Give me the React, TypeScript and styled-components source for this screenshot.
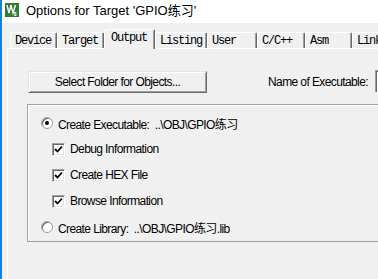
import styled, { createGlobalStyle } from 'styled-components';

const GlobalStyle = createGlobalStyle`
  html, body {
    margin: 0;
    padding: 0;
    background: #f0f0f0;
  }
`;

const Window = styled.div`
  width: 378px;
  height: 279px;
  overflow: hidden;
  display: flex;
  flex-direction: column;
  background: #f0f0f0;
  border-left: 2px solid #1c7fd6;
  box-sizing: border-box;
  font-family: "Liberation Sans", Arial, "Noto Sans CJK SC", sans-serif;
  color: #000;
`;

const TitleBar = styled.div`
  height: 23px;
  flex-shrink: 0;
  background: #ffffff;
  display: flex;
  align-items: flex-start;
  padding: 3px 0 0 3px;
  box-sizing: border-box;
  gap: 7px;
`;

const TitleText = styled.span`
  font-size: 13px;
  line-height: 15px;
  white-space: nowrap;
  color: #000;
`;

const Body = styled.div`
  flex: 1;
  display: flex;
  flex-direction: column;
  padding: 6px 0 0 5px;
`;

const TabStrip = styled.div`
  display: flex;
  align-items: flex-end;
  height: 20px;
  padding-left: 3px;
  margin-bottom: -1px;
  position: relative;
  z-index: 1;
`;

const Tab = styled.div<{ $width: number; $active?: boolean }>`
  width: ${({ $width }) => $width}px;
  flex-shrink: 0;
  height: ${({ $active }) => ($active ? 20 : 16)}px;
  margin-bottom: ${({ $active }) => ($active ? 0 : 1)}px;
  box-sizing: border-box;
  background: #f0f0f0;
  border-top: 1px solid #ffffff;
  border-left: 1px solid #ffffff;
  border-right: 1px solid #696969;
  box-shadow: inset -1px 0 0 #a0a0a0;
  border-radius: 2px 2px 0 0;
  padding: ${({ $active }) => ($active ? '2px 0 0 6px' : '2px 0 0 4px')};
  font-family: "Liberation Mono", "DejaVu Sans Mono", "Noto Sans CJK SC", monospace;
  font-size: 12px;
  letter-spacing: -1.2px;
  line-height: 12px;
  white-space: nowrap;
  overflow: hidden;
`;

const Panel = styled.div`
  flex: 1;
  border-top: 1px solid #ffffff;
  border-left: 1px solid #ffffff;
  padding: 22px 0 0 20px;
  display: flex;
  flex-direction: column;
`;

const TopRow = styled.div`
  display: flex;
  align-items: center;
  height: 22px;
`;

const Button = styled.div`
  width: 179px;
  height: 22px;
  box-sizing: border-box;
  flex-shrink: 0;
  display: flex;
  align-items: center;
  justify-content: center;
  background: #f0f0f0;
  border-top: 1px solid #e3e3e3;
  border-left: 1px solid #e3e3e3;
  border-right: 1px solid #696969;
  border-bottom: 1px solid #696969;
  box-shadow: inset 1px 1px 0 #ffffff, inset -1px -1px 0 #a0a0a0;
  font-size: 12px;
  letter-spacing: -0.6px;
  white-space: nowrap;
`;

const Label = styled.span`
  margin-left: 61px;
  font-size: 12px;
  letter-spacing: -0.6px;
  white-space: nowrap;
`;

const Input = styled.div`
  margin-left: 7px;
  width: 60px;
  height: 22px;
  flex-shrink: 0;
  box-sizing: border-box;
  margin-top: -2px;
  background: #ffffff;
  border-top: 1px solid #a0a0a0;
  border-left: 1px solid #a0a0a0;
  box-shadow: inset 1px 1px 0 #696969;
  font-size: 12px;
  padding: 3px 0 0 2px;
  white-space: nowrap;
`;

const Group = styled.div`
  margin: 11px 0 0 -1px;
  width: 400px;
  height: 138px;
  box-sizing: border-box;
  border: 1px solid #a0a0a0;
  box-shadow: inset 1px 1px 0 #ffffff;
  padding: 5px 0 0 13px;
  display: flex;
  flex-direction: column;
`;

const Row = styled.div<{ $indent?: number }>`
  height: 26px;
  display: flex;
  align-items: center;
  gap: 5px;
  padding-left: ${({ $indent }) => $indent ?? 0}px;
  font-size: 12px;
  letter-spacing: -0.6px;
  white-space: nowrap;
`;

const Radio = styled.span<{ $checked?: boolean }>`
  width: 12px;
  height: 12px;
  box-sizing: border-box;
  border-radius: 50%;
  flex-shrink: 0;
  background: #ffffff;
  border: 1px solid #a0a0a0;
  box-shadow: inset 1px 1px 0 #696969;
  display: flex;
  align-items: center;
  justify-content: center;

  &::after {
    content: '';
    width: 4px;
    height: 4px;
    border-radius: 50%;
    background: ${({ $checked }) => ($checked ? '#000' : 'transparent')};
  }
`;

const Check = styled.span`
  width: 13px;
  height: 13px;
  box-sizing: border-box;
  flex-shrink: 0;
  background: #ffffff;
  border-top: 1px solid #a0a0a0;
  border-left: 1px solid #a0a0a0;
  border-right: 1px solid #ffffff;
  border-bottom: 1px solid #ffffff;
  box-shadow: inset 1px 1px 0 #696969, inset -1px -1px 0 #e3e3e3;
  display: flex;
  align-items: center;
  justify-content: center;
`;

const KeilIcon = () => (
  <svg width="14" height="14" viewBox="0 0 14 14">
    <rect x="0" y="0" width="14" height="14" fill="#2f7d32" />
    <polyline points="2,2 4,10 6,2" fill="none" stroke="#fff" strokeWidth="1.4" />
    <polyline points="6,2 8,10 10.5,2" fill="none" stroke="#fff" strokeWidth="1.4" />
    <path d="M9 9.5 h2.5 M9.3 9.5 v1.5 h1.8 v1.5 h-2" fill="none" stroke="#fff" strokeWidth="0.9" />
  </svg>
);

const CheckMark = () => (
  <svg width="9" height="9" viewBox="0 0 9 9">
    <polyline points="1,4 3.5,6.5 8,1.5" fill="none" stroke="#000" strokeWidth="1.8" />
  </svg>
);

const tabs: { label: string; width: number; active?: boolean }[] = [
  { label: 'Device', width: 47 },
  { label: 'Target', width: 47 },
  { label: 'Output', width: 51, active: true },
  { label: 'Listing', width: 52 },
  { label: 'User', width: 50 },
  { label: 'C/C++', width: 48 },
  { label: 'Asm', width: 47 },
  { label: 'Linker', width: 47 },
];

const checks = ['Debug Information', 'Create HEX File', 'Browse Information'];

export default function App() {
  return (
    <>
      <GlobalStyle />
      <Window>
        <TitleBar>
          <KeilIcon />
          <TitleText>Options for Target 'GPIO练习'</TitleText>
        </TitleBar>
        <Body>
          <TabStrip>
            {tabs.map((t) => (
              <Tab key={t.label} $width={t.width} $active={t.active}>
                {t.label}
              </Tab>
            ))}
          </TabStrip>
          <Panel>
            <TopRow>
              <Button>Select Folder for Objects...</Button>
              <Label>Name of Executable:</Label>
              <Input>GPIO练习</Input>
            </TopRow>
            <Group>
              <Row>
                <Radio $checked />
                <span>Create Executable:&nbsp;&nbsp;{'..\\OBJ\\GPIO练习'}</span>
              </Row>
              {checks.map((c) => (
                <Row key={c} $indent={11}>
                  <Check>
                    <CheckMark />
                  </Check>
                  <span>{c}</span>
                </Row>
              ))}
              <Row>
                <Radio />
                <span>Create Library:&nbsp;&nbsp;{'..\\OBJ\\GPIO练习.lib'}</span>
              </Row>
            </Group>
          </Panel>
        </Body>
      </Window>
    </>
  );
}
